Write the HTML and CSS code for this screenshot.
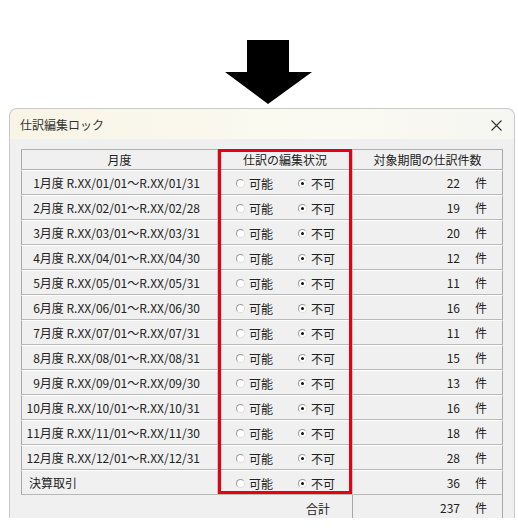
FILE: index.html
```
<!DOCTYPE html>
<html lang="ja">

<head>
    <meta charset="UTF-8">
    <title>仕訳編集ロック</title>
    <link rel="stylesheet" href="styles.css">
</head>

<body>
    <!-- down arrow -->
    <div class="arrow">
        <svg width="88" height="65" viewBox="0 0 88 65">
            <polygon points="22,0 64,0 64,32 87,32 43,64 0,32 22,32" fill="#000" />
        </svg>
    </div>

    <div class="dialog">
        <div class="titlebar">
            <span class="title">仕訳編集ロック</span>
            <svg class="close" width="11" height="11" viewBox="0 0 11 11">
                <path d="M0.5 0.5 L10.5 10.5 M10.5 0.5 L0.5 10.5" stroke="#333" stroke-width="1.1" fill="none" />
            </svg>
        </div>

        <div class="content">
            <div class="grid-wrap">
                <table class="grid">
                    <thead>
                        <tr>
                            <th class="c-month">月度</th>
                            <th class="c-state">仕訳の編集状況</th>
                            <th class="c-count">対象期間の仕訳件数</th>
                        </tr>
                    </thead>
                    <tbody id="rows"></tbody>
                    <tfoot>
                        <tr>
                            <td class="total-label" colspan="2">合計</td>
                            <td class="c-count total"><span class="num">237</span><span class="unit">件</span></td>
                        </tr>
                    </tfoot>
                </table>
                <!-- highlight around the status column -->
                <div class="highlight"></div>
            </div>
        </div>
    </div>

    <script>
        const rows = [
            ["1月度", "R.XX/01/01～R.XX/01/31", 22],
            ["2月度", "R.XX/02/01～R.XX/02/28", 19],
            ["3月度", "R.XX/03/01～R.XX/03/31", 20],
            ["4月度", "R.XX/04/01～R.XX/04/30", 12],
            ["5月度", "R.XX/05/01～R.XX/05/31", 11],
            ["6月度", "R.XX/06/01～R.XX/06/30", 16],
            ["7月度", "R.XX/07/01～R.XX/07/31", 11],
            ["8月度", "R.XX/08/01～R.XX/08/31", 15],
            ["9月度", "R.XX/09/01～R.XX/09/30", 13],
            ["10月度", "R.XX/10/01～R.XX/10/31", 16],
            ["11月度", "R.XX/11/01～R.XX/11/30", 18],
            ["12月度", "R.XX/12/01～R.XX/12/31", 28],
            ["決算取引", "", 36]
        ];

        const body = document.getElementById("rows");
        rows.forEach(function (r) {
            const tr = document.createElement("tr");
            const monthClass = r[1] ? "c-month" : "c-month left";
            tr.innerHTML =
                '<td class="' + monthClass + '">' + r[0] + (r[1] ? ' ' + r[1] : '') + '</td>' +
                '<td class="c-state">' +
                '<label class="opt"><span class="radio"></span>可能</label>' +
                '<label class="opt"><span class="radio on"></span>不可</label>' +
                '</td>' +
                '<td class="c-count"><span class="num">' + r[2] + '</span><span class="unit">件</span></td>';
            body.appendChild(tr);
        });
    </script>
</body>

</html>
```

FILE: styles.css
```
body {
    margin: 0;
    background-color: #fff;
    font-family: "Noto Sans CJK JP", "Noto Sans", sans-serif;
    font-size: 12px;
    color: #222;
}

.arrow {
    padding: 40px 0 0 225px;
    height: 108px;
    box-sizing: border-box;
}

.arrow svg {
    display: block;
}

.dialog {
    margin-left: 9px;
    width: 506px;
    height: 410px;
    box-sizing: border-box;
    border: 1px solid #c9c9c9;
    border-bottom: none;
    border-radius: 8px 8px 0 0;
    background-color: #f0f0f0;
}

.titlebar {
    height: 30px;
    display: flex;
    align-items: center;
    justify-content: space-between;
    padding: 0 12px 0 10px;
    border-radius: 8px 8px 0 0;
    background: linear-gradient(90deg, #f8f5e6, #fbfaf2 60%, #f6f6f2);
}

.title {
    font-size: 12px;
    color: #333;
}

.close {
    display: block;
    margin-top: 2px;
}

.content {
    padding: 10px 0 0 11px;
}

.grid-wrap {
    position: relative;
    width: 482px;
}

.grid {
    border-collapse: separate;
    border-spacing: 0;
    width: 482px;
    table-layout: fixed;
}

.grid th {
    height: 21px;
    font-weight: normal;
    text-align: center;
    border-top: 1px solid #b0b0b0;
    border-bottom: 1px solid #b0b0b0;
    padding: 0;
    box-sizing: border-box;
}

.grid tbody td {
    height: 25px;
    padding: 0;
    border-bottom: 1px solid #b8b8b8;
    border-top: 1px solid #fff;
    box-sizing: border-box;
}

.grid .c-month {
    width: 197px;
    border-left: 1px solid #a8a8a8;
    border-right: 1px solid #c4c4c4;
}

.grid td.c-month {
    text-align: right;
    padding-right: 17px;
}

.grid td.c-month.left {
    text-align: left;
    padding-left: 7px;
}

.grid .c-state {
    width: 134px;
}

.grid .c-count {
    width: 151px;
    border-left: 1px solid #c4c4c4;
    border-right: 1px solid #a8a8a8;
}

.opt {
    display: inline-flex;
    align-items: center;
    gap: 4px;
}

.opt:first-child {
    margin-left: 18px;
    margin-right: 25px;
}

.radio {
    width: 7px;
    height: 7px;
    border-radius: 50%;
    border: 1px solid #9a9a9a;
    border-right-color: #e0e0e0;
    border-bottom-color: #e0e0e0;
    background-color: #fff;
    position: relative;
}

.radio.on::after {
    content: "";
    position: absolute;
    left: 2px;
    top: 2px;
    width: 3px;
    height: 3px;
    border-radius: 50%;
    background-color: #111;
}

td.c-count {
    text-align: right;
}

.num {
    display: inline-block;
    text-align: right;
}

.unit {
    display: inline-block;
    width: 42px;
    text-align: center;
}

.grid tfoot td {
    height: 26px;
    padding: 0;
    box-sizing: border-box;
}

.grid tfoot td.total-label {
    text-align: right;
    padding-right: 22px;
}

.grid tfoot td.total {
    border-bottom: 1px solid #a8a8a8;
    border-left: 1px solid #a8a8a8;
}

.highlight {
    position: absolute;
    left: 197px;
    top: 0;
    width: 134px;
    height: 345px;
    box-sizing: border-box;
    border: 3px solid #e60012;
}
```
